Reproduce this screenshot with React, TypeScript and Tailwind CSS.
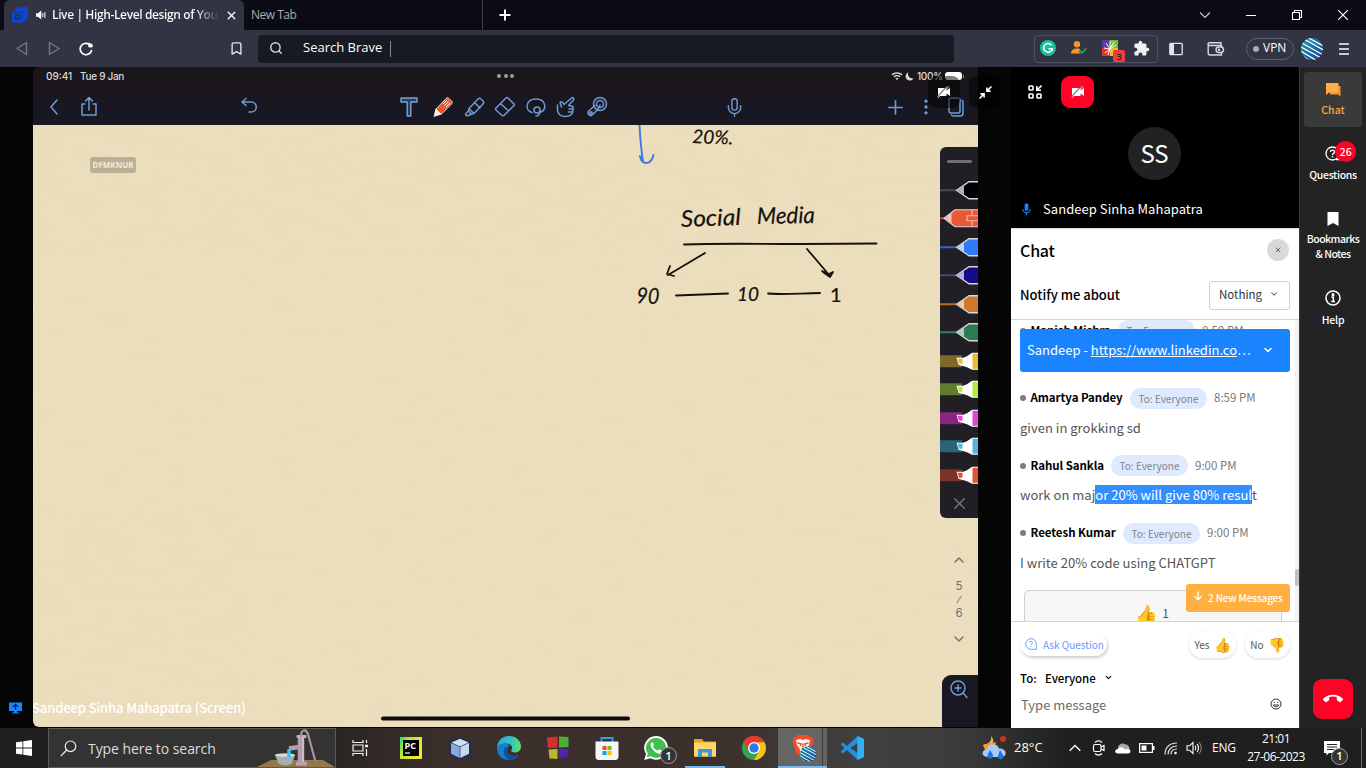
import type { ReactNode } from 'react';
import { LuBookmark, LuSearch, LuX, LuPlus, LuChevronDown, LuChevronUp, LuEllipsisVertical, LuMic } from 'react-icons/lu';
import { MdExtension, MdCallEnd, MdMic, MdWifi } from 'react-icons/md';

const icon = 'shrink-0 block';

function Cell({ className, children }: { className: string; children: ReactNode }) {
  return <div className={'flex shrink-0 items-center justify-center ' + className}>{children}</div>;
}

/* ---------- Browser ---------- */

function StripedGlobe({ className }: { className: string }) {
  return (
    <svg viewBox="0 0 22 22" className={className}>
      <defs>
        <clipPath id="globe"><circle cx="11" cy="11" r="11" /></clipPath>
        <linearGradient id="globeFill" x1="0" x2="1" y1="0" y2="1">
          <stop offset="0" stopColor="#1d9cb5" />
          <stop offset="1" stopColor="#1a3f94" />
        </linearGradient>
      </defs>
      <g clipPath="url(#globe)">
        <rect width="22" height="22" fill="url(#globeFill)" />
        <path d="M4 -2L26 10M1 0L26 14M-1 4L24 18M-2 8L22 21M-2 12L18 24M-2 16L12 25" stroke="#fff" strokeWidth="1.3" />
      </g>
    </svg>
  );
}

function TabBar() {
  return (
    <div className="flex h-[30px] bg-[#0a0b15] font-['Open_Sans',sans-serif] text-[12px]">
      <div className="ml-1 flex w-[240px] items-center rounded-t-md bg-[#323443] text-white">
        <svg viewBox="0 0 16 16" className={icon + ' ml-2 h-4 w-4'}>
          <path d="M5 0.500L16 0V10.500L11 15.500H0V5.500H3.500V2Z" fill="#0b46d8" />
          <path d="M1 5.500H10.500V15" fill="none" stroke="#123292" strokeWidth="0.800" />
          <rect x="3.700" y="8.200" width="4" height="4" fill="none" stroke="#262d55" strokeWidth="1.500" />
        </svg>
        <svg viewBox="0 0 10 10" className={icon + ' ml-[8px] h-[10px] w-[10px]'}>
          <path d="M0 3.200H2L5.300 0.500V9.500L2 6.800H0Z" fill="#fff" />
          <path d="M6.800 3V7M8.900 2V8" stroke="#fff" strokeWidth="1" />
        </svg>
        <div className="ml-[6px] w-[167px] overflow-hidden whitespace-nowrap bg-linear-to-r from-white from-85% to-transparent bg-clip-text font-semibold tracking-[-0.38px] text-transparent">
          Live | High-Level design of You
        </div>
        <LuX className={icon + ' ml-[6px] h-[13px] w-[13px]'} strokeWidth={2.4} />
      </div>
      <div className="flex w-[239px] items-center border-r border-[#3f3d3a] pl-[7px] tracking-[-0.5px] text-[#a9abb5]">New Tab</div>
      <Cell className="w-[44px]"><LuPlus className="h-4 w-4 text-white" strokeWidth={3} /></Cell>
      <div className="flex-1" />
      <div className="flex items-center text-white">
        <Cell className="w-[46px]"><svg viewBox="0 0 12 8" className="h-2 w-3"><path d="M1 1.500L6 6.500L11 1.500" fill="none" stroke="#c9cad0" strokeWidth="1.100" /></svg></Cell>
        <Cell className="w-[46px]"><div className="h-px w-[10px] bg-white" /></Cell>
        <Cell className="w-[46px]"><svg viewBox="0 0 12 12" className="h-3 w-3"><path d="M1.500 3.500H8.500V10.500H1.500ZM3.500 3.500V1.500H10.500V8.500H8.500" fill="none" stroke="#fff" strokeWidth="1.100" /></svg></Cell>
        <Cell className="w-[46px]"><svg viewBox="0 0 12 12" className="h-3 w-3"><path d="M1.200 1.200L10.800 10.800M10.800 1.200L1.200 10.800" stroke="#fff" strokeWidth="1.200" /></svg></Cell>
      </div>
    </div>
  );
}

function AddressBar() {
  return (
    <div className="flex h-[37px] items-center bg-[#323443] font-['Open_Sans',sans-serif] text-[13px] text-white">
      <Cell className="ml-1.5 w-8"><svg viewBox="0 0 14 14" className="h-[15px] w-[14px]"><path d="M11.500 1V13L2 7Z" fill="none" stroke="#747785" strokeWidth="1.400" strokeLinejoin="round" /></svg></Cell>
      <Cell className="w-8"><svg viewBox="0 0 14 14" className="h-[15px] w-[14px]"><path d="M2.500 1V13L12 7Z" fill="none" stroke="#747785" strokeWidth="1.400" strokeLinejoin="round" /></svg></Cell>
      <Cell className="w-8">
        <svg viewBox="0 0 14 14" className="h-[14px] w-[14px]">
          <path d="M12.600 7.800A5.700 5.700 0 1 1 10 2.200" fill="none" stroke="#fff" strokeWidth="1.700" />
          <path d="M9.500 1L13.200 2.500V5H9.800Z" fill="#fff" stroke="#fff" strokeWidth="0.800" strokeLinejoin="round" />
        </svg>
      </Cell>
      <Cell className="ml-[118px] w-8"><LuBookmark className="-mt-px h-[17px] w-[15px] text-[#e2e3e8]" strokeWidth={2.2} /></Cell>
      <div className="ml-[6px] flex h-[28px] w-[696px] items-center rounded-[4px] bg-[#171a23]">
        <LuSearch className={icon + ' -mt-px ml-[11px] h-[14px] w-[14px] text-[#d6d7dc]'} strokeWidth={2.4} />
        <span className="-mt-px ml-5 whitespace-nowrap">Search Brave</span>
        <div className="ml-2 h-4 w-px bg-[#8b8d96]" />
      </div>
      <div className="ml-20 flex h-[28px] w-[124px] items-center rounded-[4px] border border-[#505261]">
        <Cell className="-ml-px w-[28px]">
          <svg viewBox="0 0 16 16" className="-mt-px h-4 w-4"><circle cx="8" cy="8" r="8" fill="#15c39a" /><path d="M11.500 5.300A4.300 4.300 0 1 0 12.200 8.800H8.500" fill="none" stroke="#fff" strokeWidth="1.500" /><path d="M12.200 8.800V11.300" stroke="#fff" strokeWidth="1.200" /></svg>
        </Cell>
        <Cell className="ml-[1px] w-[32px]">
          <svg viewBox="0 0 16 14" className="-mt-px h-[14px] w-4"><circle cx="6" cy="3.200" r="3.200" fill="#f79431" /><path d="M0 12.500C0 9 2.500 7.500 6 7.500C8 7.500 9 8 9.500 8.500L8 10.500L9.500 12.500Z" fill="#f79431" /><path d="M8.700 9.500L11 12L15.200 7.500" fill="none" stroke="#27ae60" strokeWidth="1.500" /></svg>
        </Cell>
        <div className="relative flex w-[32px] items-center justify-center">
          <svg viewBox="0 0 16 16" className="-mt-px h-4 w-4">
            <path d="M0 0H8V8H0Z" fill="#5a3c96" /><path d="M8 0H16V8H8Z" fill="#7dbb3f" /><path d="M0 8H8V16H0Z" fill="#e5352d" /><path d="M8 8H16V16H8Z" fill="#f5b731" />
            <path d="M6 15L8 9L3 13M8 9L2 8M8 9L4 3M8 9L8 1M8 9L12 2M8 9L14 5" fill="none" stroke="#fff" strokeWidth="1" />
          </svg>
          <div className="absolute left-[18px] top-[9px] flex h-3 w-3 items-center justify-center rounded-[2px] bg-[#f03c3c] text-[9px] font-semibold leading-none text-[#1b1b1b]">3</div>
        </div>
        <Cell className="w-[32px]"><MdExtension className="-mt-px h-[17px] w-[17px] text-[#f0f0f3]" /></Cell>
      </div>
      <Cell className="w-9">
        <svg viewBox="0 0 14 14" className="h-[14px] w-[14px]"><rect x="0.800" y="1.300" width="12.400" height="11.400" rx="1" fill="none" stroke="#e4e5ea" strokeWidth="1.300" /><path d="M1 1.500H5V12.500H1Z" fill="#e4e5ea" /></svg>
      </Cell>
      <Cell className="ml-[6px] w-[32px]">
        <svg viewBox="0 0 18 16" className="h-4 w-[18px]" fill="none" stroke="#d6d7dd" strokeWidth="1.400"><path d="M14.500 6V4.500H2.500C.5 4.500 .5 1.800 2.500 1.800H14V4.500M1.200 3V12C1.200 13.500 2 14 3 14H14.500V11.500" /><rect x="9" y="6" width="7.500" height="5.500" rx="2.700" /><circle cx="12" cy="8.800" r=".6" /></svg>
      </Cell>
      <div className="ml-[14px] flex h-[22px] w-[48px] items-center rounded-full border border-[#5f6170] pl-[6px] text-[12px]">
        <div className="h-[6px] w-[6px] rounded-full bg-[#a9abba]" />
        <span className="-mt-px ml-[4px]">VPN</span>
      </div>
      <Cell className="ml-[7px] w-[22px]"><StripedGlobe className="h-[22px] w-[22px]" /></Cell>
      <div className="ml-[16px] flex w-[10px] flex-col gap-[3px]">
        <div className="h-[2px] bg-[#c5c6ce]" /><div className="h-[2px] bg-[#c5c6ce]" /><div className="h-[2px] bg-[#c5c6ce]" />
      </div>
    </div>
  );
}

/* ---------- Shared whiteboard ---------- */

function Tool({ className, children }: { className: string; children: ReactNode }) {
  return (
    <Cell className={'w-[30px] ' + className}>
      <svg viewBox="0 0 22 22" className="h-[22px] w-[22px]" fill="none" stroke="#6f9ad3" strokeWidth="1.500" strokeLinecap="round" strokeLinejoin="round">{children}</svg>
    </Cell>
  );
}

function BoardHeader() {
  return (
    <div className="flex h-[58px] flex-col rounded-tl-[6px] bg-[#1a161c]">
      <div className="flex h-[18px] items-center pl-[13px] font-['Inter',sans-serif] text-[10px] font-medium text-[#dcdadd]">
        <span className="w-[34px]">09:41</span>
        <span className="w-[44px] whitespace-nowrap tracking-[-0.3px]">Tue 9 Jan</span>
        <div className="ml-[373px] flex gap-[2.500px]">
          <div className="h-1 w-1 rounded-full bg-[#9d9a9f]" /><div className="h-1 w-1 rounded-full bg-[#9d9a9f]" /><div className="h-1 w-1 rounded-full bg-[#9d9a9f]" />
        </div>
        <MdWifi className={icon + ' ml-[377px] h-[12px] w-[12px]'} />
        <svg viewBox="0 0 8 8" className={icon + ' ml-[2px] h-[9px] w-[9px]'}><path d="M3 .3A3.800 3.800 0 1 0 7.800 5.500A3.900 3.900 0 0 1 3 .3Z" fill="#dcdadd" /></svg>
        <span className="ml-[3px] w-[26px] tracking-[-0.3px]">100%</span>
        <div className="ml-[2px] h-[8px] w-[17px] rounded-[3px] bg-white" />
        <div className="ml-px h-[3px] w-px bg-[#8a888c]" />
      </div>
      <div className="flex h-10 items-center bg-linear-to-b from-[#1a161c] via-[#181722] to-[#191821] pl-[1px] pt-[4px]">
        <Tool className="ml-[5px]"><path d="M14 4L8 11L14 18" /></Tool>
        <Tool className="ml-[5px]"><path d="M7 8H4V19H18V8H15M11 14V2M7.500 5L11 1.500L14.500 5" /></Tool>
        <Tool className="ml-[130px]"><path d="M4 6H13C20 6 20 16 13 16H11M8 2.500L4 6L8 9.500" /></Tool>
        <Cell className="ml-[130px] w-[30px]">
          <svg viewBox="0 0 22 22" className="h-[22px] w-[22px]"><path d="M3 2H19V6H12.800V20H9.200V6H3Z" fill="#2a3c5a" stroke="#7ba3da" strokeWidth="1.400" strokeLinejoin="round" /></svg>
        </Cell>
        <Cell className="ml-[4px] w-[30px]">
          <svg viewBox="0 0 22 22" className="h-[22px] w-[22px]">
            <path d="M4 13L14 2.500C15 1.500 16 1.500 17 2.500L19.500 5C20.500 6 20.500 7 19.500 8L9 18.500Z" fill="#e8562e" stroke="#f2d7d0" strokeWidth="1" />
            <path d="M3.500 12.500L9.500 18.500L1.500 21Z" fill="#f6ece9" />
            <path d="M11 8L15 4M14 11L18 7M12.500 9.500L16.500 5.500" stroke="#fff" strokeWidth="1" />
          </svg>
        </Cell>
        <Tool className="ml-[2px]"><path d="M5 12.500L14 3C15 2 16 2 17 3L19 5C20 6 20 7 19 8L10 17.500ZM10.500 6.500L16 12M5 12.500L4.500 15L7.500 18L10 17.500M4.500 15L1.800 17.500V19.500H4.500L7.500 18" /></Tool>
        <Tool className=""><path d="M2 12L12 2C12.500 1.500 13.500 1.500 14 2L20 8C20.500 8.500 20.500 9 20 9.500L10.500 19C9.500 20 8.500 20 7.500 19L2 14C1.500 13.500 1.500 12.500 2 12ZM6.500 7.500L14.500 15" /></Tool>
        <Tool className="ml-[1px]"><path d="M7 16.500C-1 14 1 3 11 3C21 3 22.500 13.500 15 16.500" /><circle cx="12" cy="14" r="3" /><path d="M15 14.500C15 18 13.500 20 11 20" /></Tool>
        <Tool className=""><path d="M2.500 9V14C2.500 18 6 20.500 10 20.500C15 20.500 18 18.500 18 14L18 10.500L13.500 9.500L18.500 4C19.500 2.500 18 1 16.500 2L9 8.500L7.500 6.500C6.500 5 4.500 6 5.200 7.500L6.500 11M14 13H18M13.500 16H17" /></Tool>
        <Tool className="ml-px"><circle cx="14" cy="8" r="6.500" /><circle cx="14" cy="8" r="3.500" /><path d="M9 9.500L2.500 15C1 17 3.500 20.500 5.500 19.500L12 13.500L14 9" /><circle cx="5" cy="17" r="1.200" /></Tool>
        <Cell className="ml-[107px] w-[30px]"><LuMic className="h-[21px] w-[21px] text-[#6f9ad3]" strokeWidth={1.6} /></Cell>
        <Cell className="ml-[131px] w-[30px]"><LuPlus className="h-[23px] w-[23px] text-[#6f9ad3]" strokeWidth={1.7} /></Cell>
        <Cell className="ml-px w-[30px]"><LuEllipsisVertical className="h-5 w-5 text-[#6f9ad3]" strokeWidth={2} /></Cell>
        <Tool className=""><rect x="4" y="2" width="11" height="15" rx="2" /><path d="M17 4.500C18 5 18 5.500 18 6.500V17C18 19 17 20 15.500 20H8.500C7 20 6.500 19 6.500 19" /></Tool>
      </div>
    </div>
  );
}

function Pen({ color, tip, line, selected = false }: { color: string; tip: string; line: string; selected?: boolean }) {
  return (
    <svg viewBox="0 0 38 28" className="block h-[28.5px] w-[38px]">
      <path d="M0 14H16" stroke={line} strokeWidth="2" />
      {selected ? (
        <>
          <path d="M4 14L15 5.500H39V22.500H15Z" fill={color} stroke="#d9d6dc" strokeWidth="1.200" />
          <path d="M5 14L11.500 9V19Z" fill={tip} />
          <path d="M39 11.500H27V16.500H39M32 5.500V11.500M32 16.500V22.500" fill="none" stroke="#f3b5a5" strokeWidth="1.200" />
        </>
      ) : (
        <>
          <path d="M16.500 14L29 5.500H39V22.500H29Z" fill={color} stroke="#d9d6dc" strokeWidth="1.300" />
          <path d="M17.500 14L24 9.500V18.500Z" fill={tip} />
        </>
      )}
    </svg>
  );
}

function Marker({ color, band }: { color: string; band: string }) {
  return (
    <svg viewBox="0 0 38 28" className="block h-[28.5px] w-[38px]">
      <path d="M0 8H22V20H0Z" fill={band} />
      <path d="M16.500 10.500H23L27 9L32 5.500H39V22.500H32L27 20L18.500 17.500Z" fill="#fff" />
      <path d="M17.500 11.500H22.500V16.500H19Z" fill={color} />
      <path d="M32.500 6.500H39V21.500H32.500Z" fill={color} />
    </svg>
  );
}

function PenPalette() {
  return (
    <div className="absolute right-0 top-[22px] flex w-[38px] flex-col overflow-hidden rounded-l-[6px] bg-[#211e26]">
      <Cell className="h-[28.5px]"><div className="h-[3px] w-[25px] rounded bg-[#727077]" /></Cell>
      <Pen color="#000000" tip="#b4b2b8" line="#4b494e" />
      <Pen color="#ea5a35" tip="#f4c2b6" line="#c04a2d" selected />
      <Pen color="#2f7bf6" tip="#b9d3f8" line="#2b6bc9" />
      <Pen color="#150a87" tip="#b5acd8" line="#4c4580" />
      <Pen color="#cf7a29" tip="#eccdae" line="#b56d28" />
      <Pen color="#2d7a50" tip="#abcdbd" line="#35805d" />
      <Marker color="#e9b93a" band="#7d6a29" />
      <Marker color="#b6e843" band="#627b31" />
      <Marker color="#e443cf" band="#8a2582" />
      <Marker color="#4fb6dc" band="#2b6478" />
      <Marker color="#e35332" band="#7b3326" />
      <Cell className="h-[28.5px]"><LuX className="h-[19px] w-[19px] text-[#77757b]" strokeWidth={1.8} /></Cell>
    </div>
  );
}

function Paper() {
  return (
    <div className="relative h-[602px] overflow-hidden rounded-bl-[6px] bg-[#ecdfbe]">
      <svg viewBox="0 0 945 602" className="block h-[602px] w-[945px]">
        <defs>
          <filter id="grain" x="0" y="0" width="100%" height="100%">
            <feTurbulence type="fractalNoise" baseFrequency="0.03 0.08" numOctaves="4" seed="8" />
            <feColorMatrix values="0 0 0 0 0.7  0 0 0 0 0.52  0 0 0 0 0.3  0.5 0.4 0 0 -0.3" />
          </filter>
        </defs>
        <rect width="945" height="602" filter="url(#grain)" opacity="0.16" />
        <path d="M606.500 0C607 12 608.500 26 610 37M607 31C609 41 618 40 620.500 30" fill="none" stroke="#3d79e4" strokeWidth="1.900" strokeLinecap="round" />
        <g fill="#17110d" stroke="#17110d" strokeWidth="0.200" fontFamily="Lato, sans-serif" fontStyle="italic">
          <text x="659" y="18" fontSize="19" textLength="41" lengthAdjust="spacingAndGlyphs" transform="rotate(2 659 18)">20%.</text>
          <text x="648" y="102" fontSize="23" textLength="60" lengthAdjust="spacingAndGlyphs" transform="rotate(-2 648 102)">Social</text>
          <text x="724" y="99" fontSize="23" textLength="58" lengthAdjust="spacingAndGlyphs" transform="rotate(-1 724 99)">Media</text>
          <text x="603" y="178" fontSize="22" textLength="23" lengthAdjust="spacingAndGlyphs" transform="rotate(3 603 178)">90</text>
          <text x="704" y="176" fontSize="20" textLength="22" lengthAdjust="spacingAndGlyphs">10</text>
          <text x="797" y="177" fontSize="20" fontStyle="normal">1</text>
        </g>
        <g fill="none" stroke="#17110d" strokeWidth="1.800" strokeLinecap="round" strokeLinejoin="round">
          <path d="M651 119.500C690 118 720 119 770 119L843.500 118.500" />
          <path d="M672 128L635 150M637 141L634 149L641 151" />
          <path d="M774 124L797 151M789 146L796 149L800 147L797 152L790 147" />
          <path d="M643 170.500L695 168.500M735 168.500C750 170 770 168 787 168" />
        </g>
        <path d="M350 593.500H595" stroke="#100b0b" strokeWidth="4" strokeLinecap="round" />
      </svg>
      <div className="absolute left-[57px] top-[32px] flex h-[16px] w-[46px] items-center justify-center rounded-[3px] bg-[#b9b095] font-['Open_Sans',sans-serif] text-[8px] font-bold text-[#f3ebd3]">DFMKNUR</div>
      <PenPalette />
      <div className="absolute left-[918px] top-[427px] flex w-4 flex-col items-center font-['Inter',sans-serif] text-[11.5px] leading-[16px] text-[#5d7486]">
        <LuChevronUp className="h-[16px] w-[16px]" strokeWidth={2} />
        <span className="mt-[10px]">5</span>
        <span className="text-[9px] font-bold leading-[11px]">⁄</span>
        <span>6</span>
        <LuChevronDown className="mt-[10px] h-[16px] w-[16px]" strokeWidth={2} />
      </div>
      <div className="absolute bottom-0 right-0 flex h-[52px] w-[36px] justify-center rounded-tl-[9px] bg-[#191822] pr-[2px] pt-[4px]">
        <svg viewBox="0 0 20 20" className="h-5 w-5" fill="none" stroke="#6f9ad3" strokeWidth="1.500" strokeLinecap="round"><circle cx="9" cy="9" r="7" /><path d="M14 14L18 18.500M9 6V12M6 9H12" /></svg>
      </div>
      <div className="absolute -left-[1px] top-[572px] whitespace-nowrap font-['Noto_Sans_CJK_SC',sans-serif] text-[13px] font-medium leading-[22px] tracking-[-0.11px] text-white">Sandeep Sinha Mahapatra (Screen)</div>
    </div>
  );
}

function CameraOff() {
  return (
    <svg viewBox="0 0 14 12" className="h-3 w-[14px]">
      <path d="M1 2H9.500V4.500L13 2V10L9.500 7.500V10H1Z" fill="#fff" />
      <path d="M0 11L10.500 0" stroke="#777" strokeWidth="1.200" /><path d="M1 12L12 0.500" stroke="#fff" strokeWidth="0.800" />
    </svg>
  );
}

function Whiteboard() {
  return (
    <div className="relative flex w-[1011px] bg-[#050505]">
      <div className="flex w-[33px] flex-col justify-end pb-[14px] pl-[9px]">
        <svg viewBox="0 0 13 12" className="h-3 w-[13px]"><path d="M0 .5H13V9H8V10.500H10V11.500H3V10.500H5V9H0Z" fill="#1a84ff" /><path d="M6.500 7.500V2.500M4 4.800L6.500 2.300L9 4.800" fill="none" stroke="#05152b" strokeWidth="1.200" /></svg>
      </div>
      <div className="w-[945px]"><BoardHeader /><Paper /></div>
      <div className="absolute left-[928px] top-[9px] flex h-8 w-8 items-center justify-center rounded-[8px] bg-black/50"><CameraOff /></div>
      <div className="absolute left-[969px] top-[9px] flex h-8 w-8 items-center justify-center rounded-[8px] bg-black/50">
        <svg viewBox="0 0 14 14" className="h-[13px] w-[13px]" fill="none" stroke="#fff" strokeWidth="1.700"><path d="M13.500 .5L8.500 5.500M8.500 1.500V5.500H12.500M.5 13.500L5.500 8.500M1.500 8.500H5.500V12.500" /></svg>
      </div>
    </div>
  );
}

/* ---------- Chat column ---------- */

function VideoTile() {
  return (
    <div className="flex h-[161px] flex-col bg-black text-white">
      <div className="flex h-[41px] items-end">
        <Cell className="ml-2 h-8 w-8">
          <svg viewBox="0 0 14 14" className="h-[14px] w-[14px]" fill="none" stroke="#fff" strokeWidth="1.600"><rect x="1" y="1" width="4" height="4" rx=".8" /><rect x="1" y="9" width="4" height="4" rx=".8" /><rect x="9" y="9" width="4" height="4" rx=".8" /><path d="M13.500 .5L9.500 4.500M8.800 1V5.200H13" /></svg>
        </Cell>
        <Cell className="ml-[10px] h-8 w-[33px] rounded-[9px] bg-[#fd0427]"><CameraOff /></Cell>
      </div>
      <div className="flex justify-center pr-[1px] pt-[19px]">
        <Cell className="h-[53px] w-[53px] rounded-full bg-[#222] pb-[2px] text-[24px] leading-none">SS</Cell>
      </div>
      <div className="mt-[18px] flex h-[22px] items-center pl-[8px]">
        <MdMic className="h-[15px] w-[15px] text-[#1a84ff]" />
        <span className="ml-[9px] text-[13px] tracking-[0.05px]">Sandeep Sinha Mahapatra</span>
      </div>
    </div>
  );
}

function Message({ name, time, gap, children }: { name: string; time: string; gap: string; children?: ReactNode }) {
  return (
    <div className="h-[67.5px] shrink-0">
      <div className="flex h-[21px] items-center whitespace-nowrap">
        <div className="h-[6px] w-[6px] rounded-full bg-[#7d7d7d]" />
        <span className={'ml-[4.5px] text-[11.5px] font-bold tracking-[-0.05px] text-black ' + gap}>{name}</span>
        <span className="ml-[7.5px] flex h-[21px] w-[77px] items-center justify-center rounded-full bg-[#dfeaff] text-[10px] text-[#7f8287]">To: Everyone</span>
        <span className="ml-[7px] text-[11.5px] text-[#7a7a7a]">{time}</span>
      </div>
      <p className="mt-[8px] whitespace-nowrap text-[13px] leading-[21px] tracking-[0.02px] text-[#555]">{children}</p>
    </div>
  );
}

function ChatPanel() {
  return (
    <div className="flex h-[500px] flex-col bg-white text-black">
      <div className="flex h-[45px] items-center justify-between border-t border-[#d8d8d8] pl-[9px] pr-[10px] pb-[2px]">
        <h2 className="text-[16px] font-medium tracking-[-0.2px]">Chat</h2>
        <Cell className="h-[22px] w-[22px] rounded-full bg-[#d9d9d9]"><LuX className="h-[8px] w-[8px] text-[#555]" strokeWidth={2.6} /></Cell>
      </div>
      <div className="flex h-[47px] items-center justify-between border-b border-[#d4d4d4] pl-[9px] pr-[9px] pb-[2px]">
        <span className="text-[13px] font-medium">Notify me about</span>
        <div className="flex h-[29px] w-[81px] items-center rounded-[3px] border border-[#d0d0d0] pl-[9px] text-[11.5px] text-[#333]">
          <span>Nothing</span><LuChevronDown className="-mt-[3px] ml-[7px] h-[10px] w-[10px]" strokeWidth={2.4} />
        </div>
      </div>
      <div className="relative flex h-[301px] overflow-hidden">
        <div className="flex w-[284px] flex-col pl-[9px]">
          <Message name="Manish Mishra" time="8:59 PM" gap="w-[80px]" />
          <Message name="Amartya Pandey" time="8:59 PM" gap="w-[92px]">given in grokking sd</Message>
          <Message name="Rahul Sankla" time="9:00 PM" gap="w-[73px]">work on maj<span className="bg-[#338fff] text-white">or 20% will give 80% resul</span>t</Message>
          <Message name="Reetesh Kumar" time="9:00 PM" gap="w-[85px]">I write 20% code using CHATGPT</Message>
          <div className="ml-[4px] flex h-[50px] w-[258px] shrink-0 justify-center gap-[5px] rounded-[5px] border border-[#cfcfcf] bg-[#f6f6f6] pr-[2px] pt-[9px] text-[12px] text-[#555]">
            <span className="text-[18px] leading-[27px]">👍</span><span className="leading-[26px]">1</span>
          </div>
        </div>
        <div className="w-[4px] bg-[#f2f2f2] pt-[249px]"><div className="h-[17px] rounded-sm bg-[#c1c1c1]" /></div>
        <div className="absolute left-[9px] top-[9px] flex h-[43px] w-[270px] items-center whitespace-nowrap rounded-[3px] bg-[#1a84ff] pb-[2px] pl-[7px] text-[13px] text-white">
          <span className="w-[225px]">Sandeep - <span className="underline">https://www.linkedin.co</span>…</span>
          <LuChevronDown className="ml-[10px] h-[12px] w-[12px]" strokeWidth={3} />
        </div>
        <div className="absolute left-[175px] top-[264px] flex h-[28px] w-[104px] items-center rounded-[3px] bg-[#ffb041] pb-px pl-[7px] text-[10px] font-medium tracking-[-0.15px] text-white">
          <svg viewBox="0 0 10 10" className="-mt-[3px] h-[10px] w-[10px]"><path d="M5 .5V8.500M1.500 5.200L5 8.700L8.500 5.200" fill="none" stroke="#fff" strokeWidth="1.400" /></svg>
          <span className="ml-[5px] whitespace-nowrap">2 New Messages</span>
        </div>
      </div>
      <div className="flex flex-1 flex-col border-t border-[#d4d4d4]">
        <div className="flex h-[46px] items-center pb-[2px] pl-[9px] text-[10px]">
          <div className="flex h-[24px] w-[87px] items-center rounded-full text-[#6a97ff] shadow-[1px_2px_3px_rgba(0,0,0,0.2)]">
            <svg viewBox="0 0 12 12" className="-mt-px ml-[5px] h-3 w-3" fill="none" stroke="#6a97ff" strokeWidth="0.900"><path d="M11.300 11.300H6A5.300 5.300 0 1 1 11.300 6Z" /><path d="M4.500 4.800C4.500 2.800 7.500 2.900 7.500 4.700C7.500 5.800 6 5.800 6 7M6 8V9" /></svg>
            <span className="ml-[6px] whitespace-nowrap">Ask Question</span>
          </div>
          <div className="ml-[82px] flex h-[27px] w-[47px] items-center justify-center gap-[4px] rounded-full text-[#555] shadow-[0_1px_3px_rgba(0,0,0,0.16)]">Yes<span className="text-[14px]">👍</span></div>
          <div className="ml-[9px] flex h-[27px] w-[45px] items-center justify-center gap-[4px] rounded-full text-[#555] shadow-[0_1px_3px_rgba(0,0,0,0.16)]">No<span className="text-[14px]">👎</span></div>
        </div>
        <div className="flex h-[22px] items-center pl-[9px] text-[11.5px] font-medium">
          <span className="w-[25px]">To:</span><span className="w-[51px] tracking-[-0.1px]">Everyone</span><LuChevronDown className="-mt-[3px] ml-[8px] h-[9px] w-[9px]" strokeWidth={3} />
        </div>
        <div className="flex h-[30px] items-center justify-between pl-[10px] pr-[17px] text-[13px] text-[#6b6b6b]">
          <span>Type message</span>
          <svg viewBox="0 0 12 12" className="-mt-[2px] h-3 w-3" fill="none" stroke="#333" strokeWidth="1"><circle cx="6" cy="6" r="5" /><path d="M3.300 7C4 9.300 8 9.300 8.700 7ZM4.300 3.800V5M7.700 3.800V5" /></svg>
        </div>
      </div>
    </div>
  );
}

function SideRail() {
  return (
    <div className="flex w-[67px] flex-col items-center border-l border-[#3a3a3a] bg-[#232323] text-center text-[10.5px] font-medium leading-[15px] text-white">
      <div className="mt-[5px] flex h-[55px] w-[58px] flex-col items-center rounded-[3px] bg-[#3a3a3a] text-[#ffa53d]">
        <svg viewBox="0 0 15 14" className="mt-[11px] h-[14px] w-[15px]"><path d="M4 3H14.500V13.500L12 11.500H4Z" fill="#e8973a" /><path d="M0 0H12.500V9.500H3L0 12Z" fill="#ffad46" /></svg>
        <span className="mt-[5px]">Chat</span>
      </div>
      <div className="relative mt-[19px] flex flex-col items-center">
        <svg viewBox="0 0 16 16" className="h-4 w-4" fill="none" stroke="#fff" strokeWidth="1.300"><circle cx="7.500" cy="7.500" r="6.500" /><path d="M5.500 6C5.500 3.500 9.500 3.500 9.500 6C9.500 7.500 7.500 7.300 7.500 9M7.500 10V11.500M11 13.500H15V9" /></svg>
        <span className="mt-[5px] tracking-[-0.33px]">Questions</span>
        <div className="absolute -top-[5px] left-[26px] flex h-[21px] w-[21px] items-center justify-center rounded-full bg-[#fd0427] pb-px">26</div>
      </div>
      <div className="mt-[30px] flex flex-col items-center">
        <svg viewBox="0 0 12 14" className="h-[14px] w-3"><path d="M.5 0H11.500V14L6 11L.5 14Z" fill="#fff" /></svg>
        <span className="mt-[5px] whitespace-nowrap tracking-[-0.55px]">Bookmarks<br />&amp; Notes</span>
      </div>
      <div className="mt-[29px] flex flex-col items-center">
        <svg viewBox="0 0 16 16" className="h-4 w-4" fill="none" stroke="#fff" strokeWidth="1.500"><circle cx="8" cy="8" r="7" /><path d="M6.500 7.200H8.300V11.200M6.300 11.500H10M7.500 4V5.500H8.500V4Z" /></svg>
        <span className="mt-[6px] tracking-[-0.2px]">Help</span>
      </div>
      <Cell className="mb-[9px] mt-auto h-[40px] w-[40px] rounded-[9px] bg-[#fd0427]"><MdCallEnd className="h-[20px] w-[20px] text-white" /></Cell>
    </div>
  );
}

/* ---------- Windows taskbar ---------- */

function App49({ className = '', children }: { className?: string; children: ReactNode }) {
  return <div className={'relative flex h-10 w-[49px] shrink-0 items-center justify-center ' + className}>{children}</div>;
}

function Badge() {
  return <div className="flex h-[17px] w-[17px] items-center justify-center rounded-full border border-[#a0a0a0] bg-[#353535] text-[11.5px] font-semibold leading-none text-white">1</div>;
}

function SearchBox() {
  return (
    <div className="flex h-10 w-[288px] items-center border border-[#595959] bg-[#333] text-[14px] text-[#dcdcdc]">
      <svg viewBox="0 0 17 17" className={icon + ' ml-[11px] h-[17px] w-[17px]'} fill="none" stroke="#eee" strokeWidth="1.200"><circle cx="10.500" cy="6.300" r="5.300" /><path d="M6.700 10L.8 16.200" /></svg>
      <span className="ml-[11px] w-[128px] whitespace-nowrap tracking-[-0.06px]">Type here to search</span>
      <svg viewBox="0 0 78 38" className="ml-auto h-[38px] w-[78px]">
        <path d="M0 38L14 31H66L78 38Z" fill="#92784a" />
        <path d="M44 34V8" stroke="#b59daa" strokeWidth="6.500" /><path d="M46 34V8" stroke="#d8c5cf" strokeWidth="1.500" />
        <rect x="39.500" y="6" width="10" height="3" rx="1" fill="#c5afbb" /><rect x="39" y="33" width="11" height="3.500" fill="#bca3b0" />
        <path d="M44 7C44 0 49 0 51 5L58 31" fill="none" stroke="#a892a5" strokeWidth="2.200" strokeLinecap="round" />
        <path d="M42 18L32 19.500" stroke="#b59daa" strokeWidth="4.500" />
        <path d="M18 26H38L35 34.500C31 37 25 37 21.500 34.500Z" fill="#a8adb2" /><ellipse cx="28" cy="26" rx="10" ry="1.800" fill="#d7dadc" /><path d="M32 20V28" stroke="#35c3f4" strokeWidth="3.500" />
      </svg>
    </div>
  );
}

function Apps() {
  return (
    <div className="flex">
      <App49>
        <svg viewBox="0 0 17 16" className="h-4 w-[17px]" fill="none" stroke="#f2f2f2" strokeWidth="1.200"><path d="M1 0V2.500H11V0M1 16V13.500H11V16M1 5H11V11H1ZM14.500 0V3M14.500 9V16" /><path d="M13 6H16" strokeWidth="2.500" /></svg>
      </App49>
      <App49 className="ml-px">
        <svg viewBox="0 0 22 22" className="h-[22px] w-[22px]">
          <defs><linearGradient id="pyc" x1="0" y1="0" x2="1" y2="0.600"><stop offset="0" stopColor="#21d789" /><stop offset="0.350" stopColor="#b5e433" /><stop offset="1" stopColor="#f6ea24" /></linearGradient></defs>
          <rect width="22" height="22" fill="url(#pyc)" /><rect x="3" y="3" width="16" height="16" fill="#000" />
          <text x="4.500" y="11.500" fontSize="9" fontWeight="700" fontFamily="Open Sans, sans-serif" fill="#fff" textLength="11.500" lengthAdjust="spacingAndGlyphs">PC</text><path d="M5 16H10" stroke="#fff" strokeWidth="1.200" />
        </svg>
      </App49>
      <App49>
        <svg viewBox="0 0 22 23" className="h-[23px] w-[22px]"><path d="M11 .3L21.500 5V18L11 22.700L.5 18V5Z" fill="#1c2b62" /><path d="M11 1.800L19.500 5.500L11 9.500L2.500 5.500Z" fill="#cfe2ec" /><path d="M2 6L10.700 10V21L2 16.800Z" fill="#8ba9dc" /><path d="M20 6L11.300 10V21L20 16.800Z" fill="#c4d8f0" /></svg>
      </App49>
      <App49>
        <svg viewBox="0 0 24 24" className="h-6 w-6">
          <defs><linearGradient id="edgeTop" x1="0" x2="1"><stop offset="0" stopColor="#2aa9e6" /><stop offset="0.600" stopColor="#35c3c3" /><stop offset="1" stopColor="#5fe060" /></linearGradient></defs>
          <path d="M0 12C0 5 5 0 12 0C19 0 24 5 24 10.500C24 14.500 21 16.500 18 16.500C15 16.500 13.500 15.500 14.500 14C16.500 10 13 7.500 9 7.500C5 7.500 1 9 0 12Z" fill="url(#edgeTop)" />
          <path d="M0 12C1 9 5 7.500 8 7.800C11 8 12.500 9 12.500 9.500C9 11 9 16 12.500 19C15 21 19 20.500 21.800 18.800C19 23 15.500 24 12 24C5 24 0 19 0 12Z" fill="#1480d2" />
          <path d="M8 11C5 16 8 23 13 24C17 24 20 21.500 21.800 18.800C15 22 8.500 18 9.500 11Z" fill="#12509c" />
        </svg>
      </App49>
      <App49>
        <svg viewBox="0 0 22 24" className="h-6 w-[22px]"><path d="M0 1.500L10.500 .5V11.500L1 12Z" fill="#d3322c" /><path d="M12 .5L21.500 1V11L12 11.500Z" fill="#4fae35" /><path d="M1.500 13.500L10.500 13V23L2.500 22.500Z" fill="#bdb533" /><path d="M12 13L21.500 12.500L20.500 21L12 22.500Z" fill="#5322b0" /></svg>
      </App49>
      <App49>
        <svg viewBox="0 0 24 24" className="h-6 w-6"><path d="M6.500 6V2H17.500V6" fill="none" stroke="#22a3ee" strokeWidth="2" /><path d="M.5 5.500H23.500V21C23.500 23 22 24 20.500 24H3.500C2 24 .5 23 .5 21Z" fill="#f5f5f5" /><path d="M7.500 10H11.500V14H7.500Z" fill="#f25022" /><path d="M12.500 10H16.500V14H12.500Z" fill="#7fba00" /><path d="M7.500 15H11.500V19H7.500Z" fill="#00a4ef" /><path d="M12.500 15H16.500V19H12.500Z" fill="#ffb900" /></svg>
      </App49>
      <App49>
        <svg viewBox="0 0 24 24" className="h-6 w-6"><path d="M12 0A11.800 11.800 0 0 0 2 18L.2 24L6.300 22.300A11.900 11.900 0 1 0 12 0Z" fill="#fff" /><path d="M12 2A9.900 9.900 0 0 0 3.800 17.500L2.900 21.200L6.700 20.200A9.900 9.900 0 1 0 12 2Z" fill="#3fbf50" /><path d="M8.300 6.200C6 7 6 10 8.500 13C11 16.500 14 18.300 16.500 17.500C18 17 18.500 15.500 18 14.500L15 13.200L13.500 14.800C11.500 14 10 12.500 9 10.500L10 9L8.800 6.200Z" fill="#fff" /></svg>
        <div className="absolute left-[29px] top-[19px]"><Badge /></div>
      </App49>
      <App49>
        <svg viewBox="0 0 22 18" className="h-[18px] w-[22px]"><path d="M0 0H8L10 2.500H22V18H0Z" fill="#dfa22d" /><path d="M0 3.500H22V17H0Z" fill="#ffd667" /><path d="M4 18V10H18V18H14V13.500H8V18Z" fill="#3c97dd" /></svg>
        <div className="absolute bottom-0 left-[5px] h-[2px] w-10 bg-[#76b9ed]" />
      </App49>
      <App49>
        <svg viewBox="0 0 24 24" className="h-6 w-6"><circle cx="12" cy="12" r="12" fill="#34a350" /><path d="M12 12L1.600 6A12 12 0 0 1 22.400 6Z" fill="#e33b2e" /><path d="M1.600 6L7 15.500L12 6.200H22.400A12 12 0 0 0 1.600 6Z" fill="#e33b2e" /><path d="M22.400 6.200A12 12 0 0 1 12 24L17.200 15L15 6.200Z" fill="#fbc116" /><circle cx="12" cy="12" r="6" fill="#fff" /><circle cx="12" cy="12" r="4.700" fill="#2f79ea" /></svg>
      </App49>
      <App49 className="border-b-2 border-[#76b9ed] bg-[#656565]">
        <svg viewBox="0 0 22 24" className="h-6 w-[22px]"><path d="M6 0H16L18 2H20L21.500 6L20.500 9L18 18L11 24L4 18L1.500 9L.5 6L2 2H4Z" fill="#fb4b22" /><path d="M4 5L8 4L11 5L14 4L18 5L17 10L14.500 13L14 16L11 18L8 16L7.500 13L5 10Z" fill="#fff" /><path d="M5.500 8L9.500 9L8 11M16.500 8L12.500 9L14 11M11 9V14" fill="none" stroke="#fb4b22" strokeWidth="1.400" /></svg>
        <div className="absolute left-[22px] top-[18px]"><StripedGlobe className="h-4 w-4" /></div>
        <div className="absolute right-[4px] top-0 h-[38px] w-px bg-[#3a3a3a]" />
      </App49>
      <App49>
        <svg viewBox="0 0 24 24" className="h-6 w-6"><path d="M17.500 0L24 3V21L17.500 24L7 14L3 17.500L.5 16L4.500 12L.5 8L3 6.500L7 10Z" fill="#2490dc" /><path d="M17.500 7L10.500 12L17.500 17Z" fill="#3f403f" /><path d="M17.500 0L24 3V21L17.500 24Z" fill="#37aef2" /></svg>
      </App49>
    </div>
  );
}

function Tray() {
  return (
    <div className="ml-auto flex h-10 items-center text-white">
      <svg viewBox="0 0 24 24" className={icon + ' h-6 w-6'}>
        <path d="M9 0C13 4 12 10 5 10L1 8.500C7 8 10 5 9 0Z" fill="#f6b13c" /><path d="M1 9L14 6L12 14H3Z" fill="#ef9c33" />
        <path d="M6 21C-1 21 -1 14 4.500 13.500C6 7 15 6.500 17 12.500C25 12 26 21 19 21Z" fill="#a9c9f7" /><path d="M8 14L11 19C11 24 5 24 5.500 19ZM18 14L21.500 20C21 25 15.500 24 16 20Z" fill="#1b74e8" />
        <circle cx="21" cy="3" r="3" fill="#d32f20" />
      </svg>
      <span className="ml-2 w-[30px] text-[13px]">28°C</span>
      <Cell className="ml-[19px] w-6"><svg viewBox="0 0 12 8" className="h-2 w-3"><path d="M.7 6.800L6 1.500L11.300 6.800" fill="none" stroke="#fff" strokeWidth="1.300" /></svg></Cell>
      <Cell className="w-6"><svg viewBox="0 0 14 16" className="h-4 w-[14px]" fill="none" stroke="#fff" strokeWidth="1.200"><rect x="1.500" y="4.500" width="7.500" height="7" rx="1.500" /><path d="M9 7L12 5.500V10.500L9 9M3 2.500C5 .4 8 .4 10 2.500M3 13.500C5 15.600 8 15.600 10 13.500" /></svg></Cell>
      <Cell className="w-6"><svg viewBox="0 0 16 11" className="h-[11px] w-4"><path d="M3 7C2 3 6 -1 10 1.200C15 1.500 16 8 13 9Z" fill="#a9a9a9" /><path d="M3 10.500C-1 10.500 -.5 6 3 6C5 3 9 4 10 6.500L12 6C16.500 6 16.500 10.500 13 10.500Z" fill="#fff" /></svg></Cell>
      <Cell className="w-6"><svg viewBox="0 0 16 10" className="h-[10px] w-4"><rect x=".6" y=".6" width="12.800" height="8.800" fill="none" stroke="#fff" strokeWidth="1.200" /><path d="M2.500 2.500H7.500V7.500H2.500ZM14 3H15.500V7H14Z" fill="#fff" /></svg></Cell>
      <Cell className="w-6"><svg viewBox="0 0 14 13" className="h-[13px] w-[14px]" fill="none" stroke="#ddd" strokeWidth="1.200"><path d="M1 12.500C1 5 6 1 13 1M4 12.500C4 7 8 4 13 4M7 12.500C7 9 9.500 7 13 7" /><circle cx="11.500" cy="11" r="1.300" fill="#fff" stroke="none" /></svg></Cell>
      <Cell className="w-[22px]"><svg viewBox="0 0 16 14" className="h-[14px] w-4" fill="none" stroke="#fff" strokeWidth="1.100"><path d="M1 4.800H3.500L7 1.500V12.500L3.500 9.200H1ZM9 5C10 6 10 8 9 9M11 3C13 5 13 9 11 11" /><path d="M13 1C16 4.500 16 9.500 13 13" stroke="#888" /></svg></Cell>
      <span className="ml-[7px] w-[24px] text-[12px] tracking-[-0.2px]">ENG</span>
      <div className="ml-[9px] flex w-[62px] flex-col items-center whitespace-nowrap text-[12px] leading-[18px] tracking-[-0.5px]"><span>21:01</span><span>27-06-2023</span></div>
      <div className="relative ml-[17px] w-[37px]">
        <svg viewBox="0 0 16 15" className="h-[15px] w-4"><path d="M0 0H16V12H5L2.500 14.500V12H0Z" fill="#fff" /><path d="M3 3.500H13M3 6H13M3 8.500H10" stroke="#222" strokeWidth="1.100" /></svg>
        <div className="absolute left-[7px] top-[7px]"><Badge /></div>
      </div>
      <div className="h-10 w-px bg-[#6a6a6a]" />
      <div className="w-1" />
    </div>
  );
}

function Taskbar() {
  return (
    <div className="flex h-10 items-center bg-[linear-gradient(90deg,#1f1f1f_0%,#1f1f1f_20%,#3a2f2a_32%,#3b302b_52%,#40403f_63%,#3c3c3b_70%,#1f1f1f_78%)] font-['Open_Sans',sans-serif]">
      <Cell className="w-12"><svg viewBox="0 0 16 16" className="h-4 w-4"><path d="M0 2.300L6.500 1.400V7.600H0ZM7.300 1.300L16 0V7.600H7.300ZM0 8.400H6.500V14.600L0 13.700ZM7.300 8.400H16V16L7.300 14.700Z" fill="#fff" /></svg></Cell>
      <SearchBox />
      <Apps />
      <Tray />
    </div>
  );
}

export default function App() {
  return (
    <div className="flex h-[768px] w-[1366px] flex-col overflow-hidden bg-black">
      <TabBar />
      <AddressBar />
      <div className="flex h-[661px] font-['Noto_Sans_CJK_SC',sans-serif]">
        <Whiteboard />
        <div className="w-[288px]"><VideoTile /><ChatPanel /></div>
        <SideRail />
      </div>
      <Taskbar />
    </div>
  );
}
